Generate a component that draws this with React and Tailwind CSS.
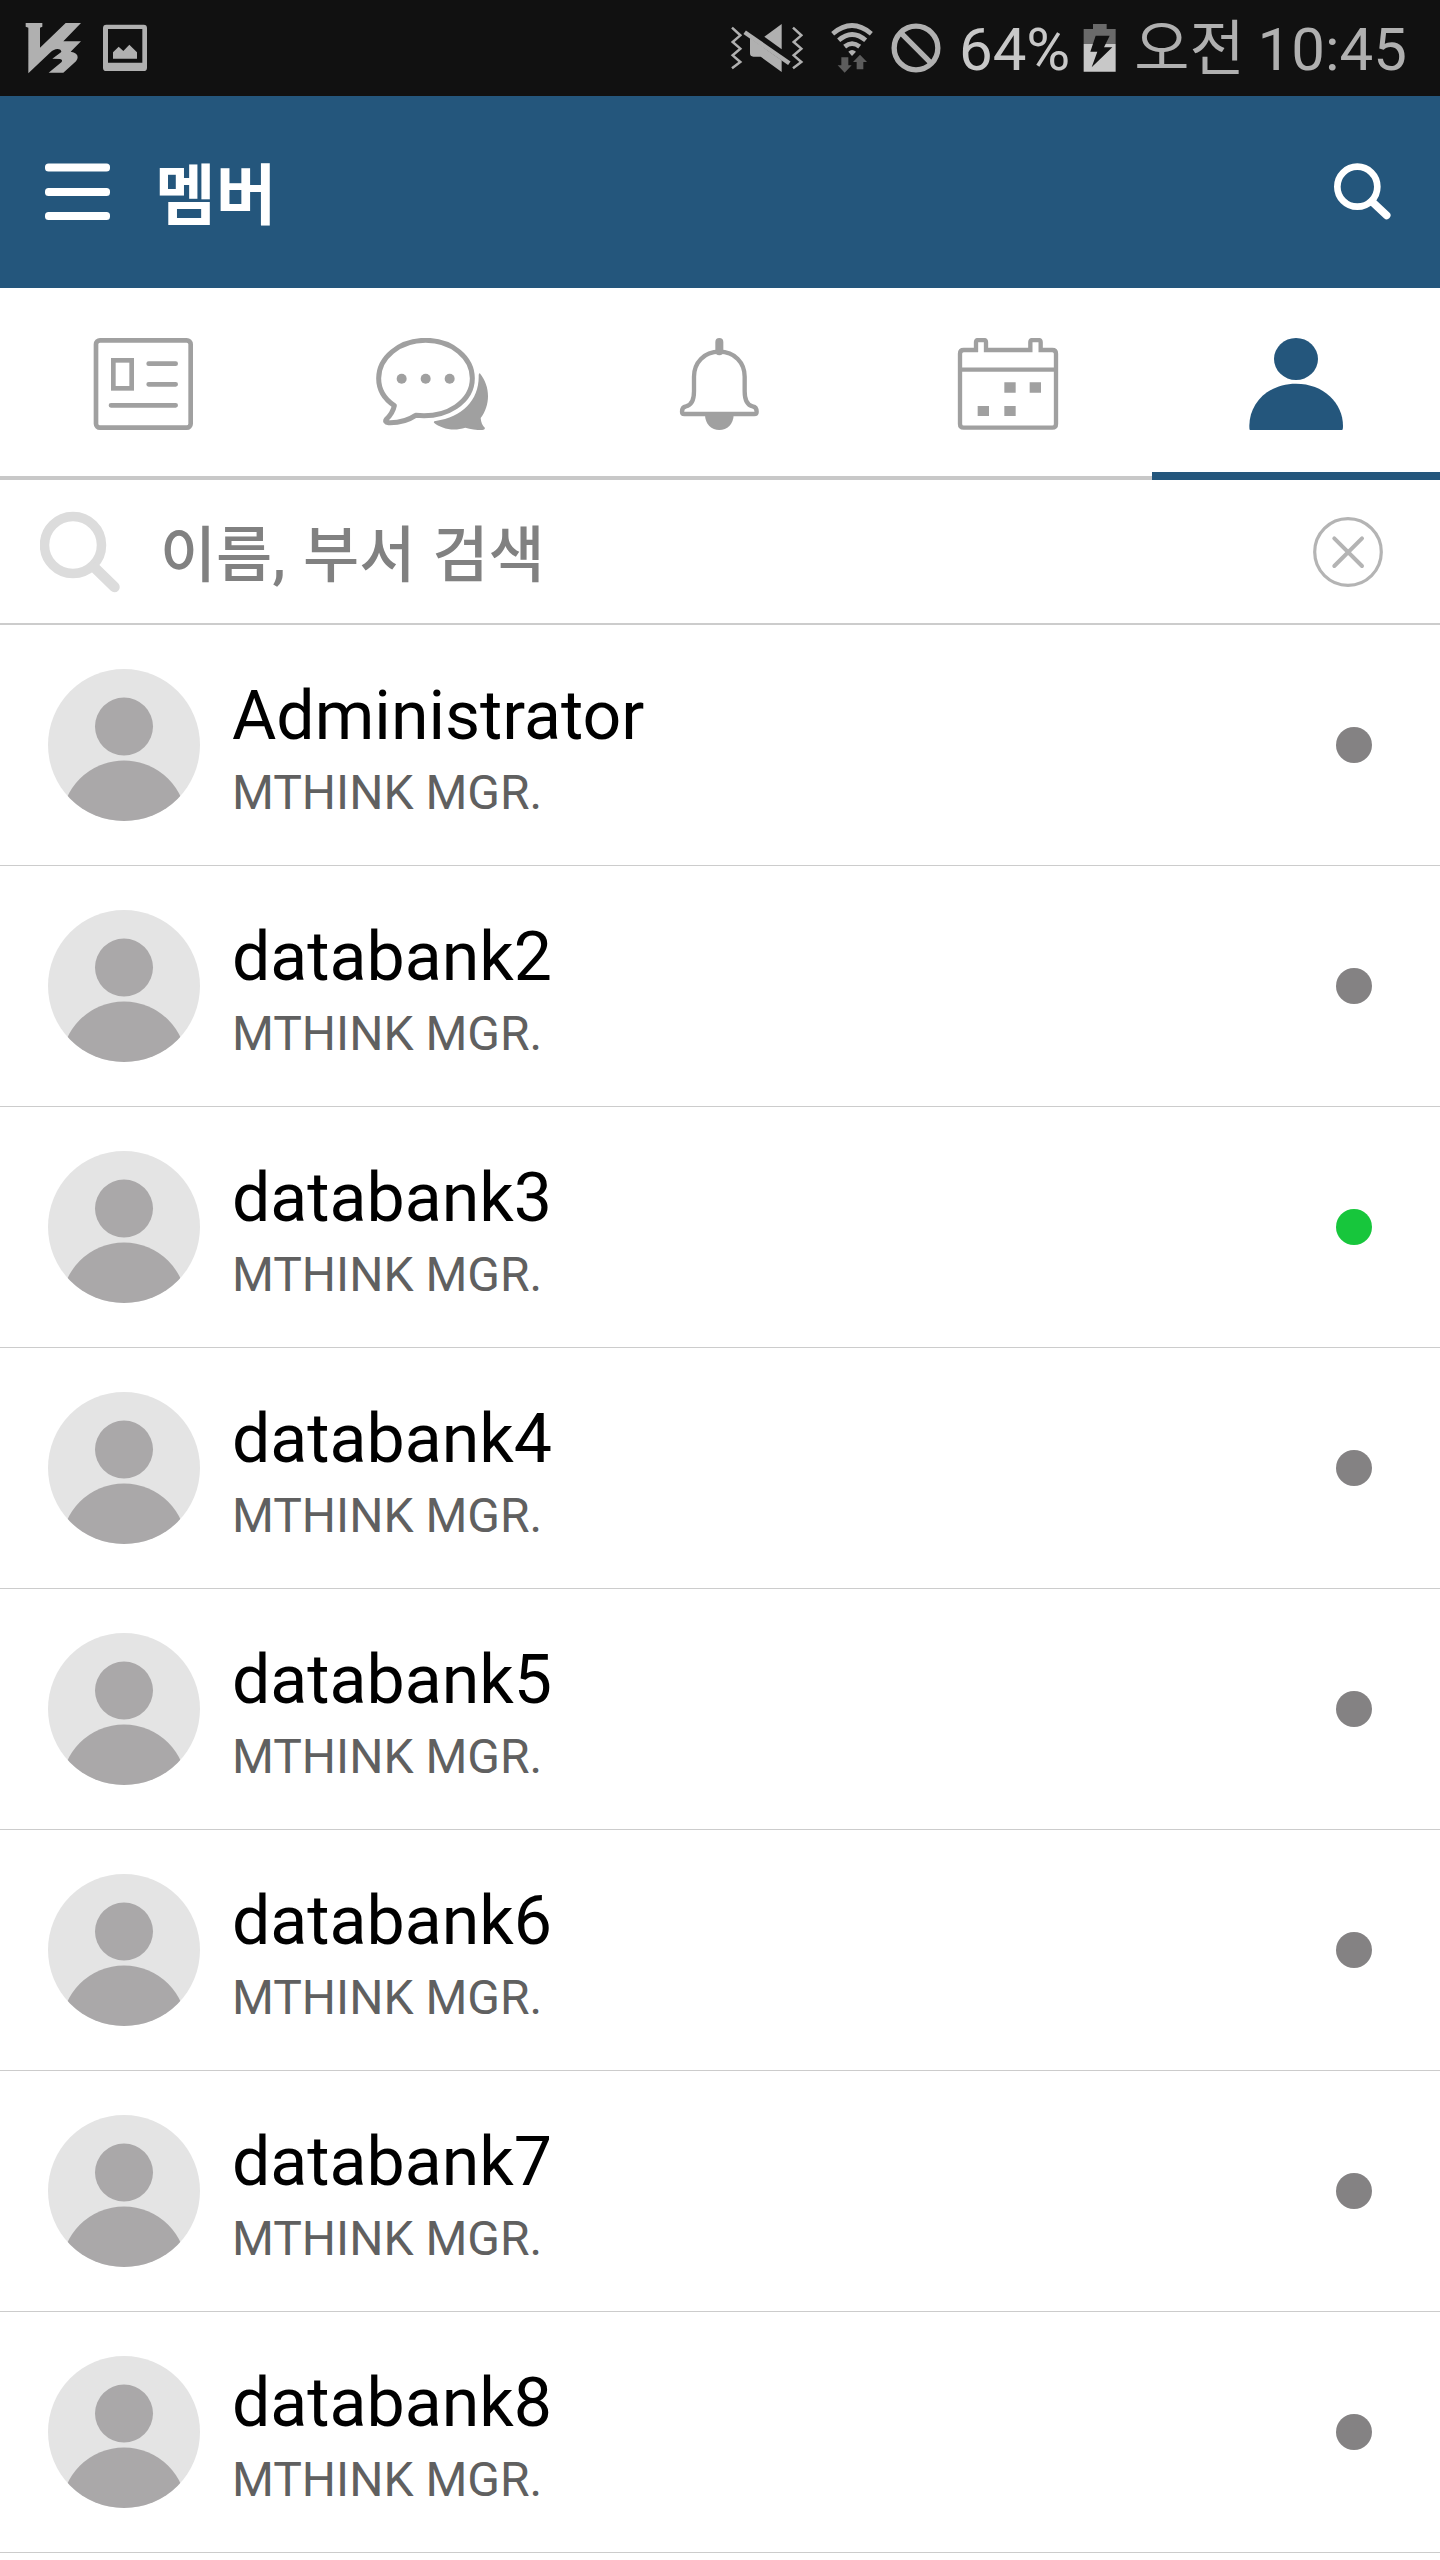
import React from "react";

const members = [
    { id: 1, name: "Administrator", dept: "MTHINK MGR.", online: false },
    { id: 2, name: "databank2", dept: "MTHINK MGR.", online: false },
    { id: 3, name: "databank3", dept: "MTHINK MGR.", online: true },
    { id: 4, name: "databank4", dept: "MTHINK MGR.", online: false },
    { id: 5, name: "databank5", dept: "MTHINK MGR.", online: false },
    { id: 6, name: "databank6", dept: "MTHINK MGR.", online: false },
    { id: 7, name: "databank7", dept: "MTHINK MGR.", online: false },
    { id: 8, name: "databank8", dept: "MTHINK MGR.", online: false },
];

const StatusBar = () => (
    <div className="flex h-24 items-start bg-[#111111] pl-[25px] pr-[33px] text-[#b0b0b0]">
        {/* V3 */}
        <svg className="mt-[22px] h-[52px] w-[57px]" viewBox="75 66 171 156" fill="currentColor">
            <path d="M77 69H127V80L120 83V143L197 69H243L190 124H243L212 155Q233 158 233 172Q233 178 228 184L190 218H146L184 187Q190 180 180 177L157 176L184 156Q184 147 172 147Q162 147 150 158L85 220V83L77 80Z" />
        </svg>
        {/* Screenshot */}
        <svg className="ml-[21px] mt-[24px] h-[48px] w-[44px]" viewBox="309 72 132 144" fill="currentColor">
            <path fillRule="evenodd" d="M319 74H431Q441 74 441 84V203Q441 213 431 213H319Q309 213 309 203V84Q309 74 319 74ZM324 87V188H427V87Z" />
            <path d="M339 176V157L356 140L370 153L388 134L411 157V176Z" />
        </svg>

        <div className="ml-auto flex items-start">
            {/* Mute */}
            <svg className="mt-[23px] h-[50px] w-[74px]" viewBox="90 69 222 150" fill="currentColor">
                <path d="M96 83L121 106L98 126L121 146L98 166L121 186L96 205M279 83L304 106L281 126L304 146L281 166L304 186L279 205" fill="none" stroke="currentColor" strokeWidth="7.5" />
                <path d="M245 72V148L193 110Z" />
                <path d="M150 114L245 181V216L182 170H160Q150 170 150 160Z" />
                <path d="M134 97L268 190" stroke="currentColor" strokeWidth="13" />
            </svg>
            {/* Wifi */}
            <svg className="ml-[27px] mt-[23px] h-[50px] w-[42px]" viewBox="394 68 126 150" fill="currentColor">
                <g fill="none" stroke="currentColor" strokeWidth="14">
                    <path d="M399 100Q457 51 515 100" />
                    <path d="M417 120Q457 85 498 120" />
                    <path d="M435 139Q457 121 480 139" />
                </g>
                <path d="M446 154Q457 144 469 154L457 167Z" />
                <g fill="#5c5c5c">
                    <path d="M425 171H446V195H456L435 217L414 195H425Z" />
                    <path d="M471 207H491V185H502L481 163L460 185H471Z" />
                </g>
            </svg>
            {/* Blocked */}
            <svg className="ml-[18px] mt-[23px] h-[50px] w-[50px]" viewBox="572 69 150 150" fill="none" stroke="currentColor" strokeWidth="16">
                <circle cx="647" cy="144" r="65.5" />
                <path d="M601 98L693 190" />
            </svg>
            <span className="ml-[18px] mr-[1px] mt-[14px] font-[Roboto] text-[60px] leading-[72px] text-[#c8c8c8]">64%</span>
            {/* Battery */}
            <svg className="ml-[12px] mt-[24px] h-[48px] w-[33px]" viewBox="67 72 99 144">
                <path d="M97 72H138V87H165V132H69V87H97Z" fill="#6a6a6a" />
                <path d="M69 132H165V215H69Z" fill="#c8c8c8" />
                <path d="M105 107H147L130 142H155L93 202L110 155H89Z" fill="#111111" />
            </svg>
            <span className="ml-[18px] mt-[14px] whitespace-nowrap font-[Roboto,'Noto_Sans_CJK_KR',sans-serif] text-[60px] leading-[72px] [word-spacing:-2px]">오전 10:45</span>
        </div>
    </div>
);

const Header = () => (
    <header className="flex h-48 items-center bg-[#24567c] pl-[45px] pr-[49px]">
        <svg className="h-[58px] w-[65px]" viewBox="0 0 65 58" fill="#ffffff">
            <rect y="0.5" width="65" height="8" rx="3.5" />
            <rect y="25" width="65" height="8" rx="3.5" />
            <rect y="49" width="65" height="8" rx="3.5" />
        </svg>
        <h1 className="mb-[4px] ml-[45px] font-['Noto_Sans_CJK_KR',sans-serif] text-[66px] font-bold leading-[80px] text-white">멤버</h1>
        <svg className="ml-auto h-[58px] w-[58px]" viewBox="820 488 174 174" fill="none" stroke="#ffffff" strokeLinecap="round">
            <circle cx="893" cy="559" r="60" strokeWidth="20" />
            <path d="M937 604L981 645" strokeWidth="23" />
        </svg>
    </header>
);

const Tabs = () => (
    <nav className="grid h-48 grid-cols-5 text-[#a0a0a0]">
        {/* News */}
        <div className="flex justify-center border-b-4 border-[#c8c8c8] pt-[50px]">
            <svg className="h-[92px] w-[102px]" viewBox="99 84 306 276" fill="none" stroke="currentColor" strokeWidth="14">
                <rect x="108" y="91" width="284" height="262" rx="12" />
                <rect x="160" y="151" width="55" height="84" />
                <path d="M266 161H347M266 223H347M153 286H347" strokeLinecap="round" />
            </svg>
        </div>
        {/* Chat */}
        <div className="flex justify-center border-b-4 border-[#c8c8c8] pt-[50px]">
            <svg className="h-[92px] w-[112px]" viewBox="948 84 336 276" fill="currentColor">
                <path d="M1003 287C974 268 956 240 956 205C956 143 1018 91 1097 91C1176 91 1237 143 1237 205C1237 274 1162 326 1067 316C1043 332 1014 339 985 338C977 338 975 333 979 328C993 314 1000 302 1003 287Z" fill="none" stroke="currentColor" strokeWidth="15" strokeLinejoin="round" />
                <circle cx="1025" cy="206" r="15" />
                <circle cx="1097" cy="206" r="15" />
                <circle cx="1169" cy="206" r="15" />
                <path d="M1259 189C1276 210 1284 234 1284 258C1284 283 1276 306 1262 324C1263 337 1267 347 1275 354C1274 358 1272 360 1267 360C1248 360 1232 358 1216 353C1179 365 1142 355 1122 338Q1120 333 1127 333C1209 321 1259 268 1256 194Z" />
            </svg>
        </div>
        {/* Notifications */}
        <div className="flex justify-center border-b-4 border-[#c8c8c8] pt-[50px]">
            <svg className="h-[92px] w-[82px]" viewBox="117 84 246 276" fill="none" stroke="currentColor" strokeWidth="13">
                <path d="M238 125C192 125 162 158 162 200V244C162 272 154 286 138 289Q126 291 126 305Q126 312 133 312H343Q350 312 350 305Q350 291 338 289C322 286 314 272 314 244V200C314 158 284 125 238 125Z" />
                <path d="M238 96V124" strokeWidth="24" strokeLinecap="round" />
                <path d="M195 314H281C281 342 261 360 238 360S195 342 195 314Z" fill="currentColor" stroke="none" />
            </svg>
        </div>
        {/* Calendar */}
        <div className="flex justify-center border-b-4 border-[#c8c8c8] pt-[50px]">
            <svg className="h-[92px] w-[102px]" viewBox="951 84 306 276" fill="none" stroke="currentColor" strokeWidth="13">
                <path d="M1014 120H971Q960 120 960 131V342Q960 353 971 353H1237Q1248 353 1248 342V131Q1248 120 1237 120H1202V97Q1202 90 1195 90H1178Q1171 90 1171 97V120H1038V97Q1038 90 1031 90H1015Q1008 90 1008 97V126M1171 114V126M1202 114V126M1038 114V126" />
                <path d="M960 179H1248" />
                <path d="M1093 217H1127V248H1093ZM1169 217H1203V248H1169ZM1013 288H1047V318H1013ZM1093 288H1127V318H1093Z" fill="currentColor" stroke="none" />
            </svg>
        </div>
        {/* Members */}
        <div className="flex justify-center border-b-8 border-[#24567c] pt-[50px]">
            <svg className="h-[92px] w-[94px]" viewBox="447 84 282 276" fill="#24567c">
                <ellipse cx="588" cy="147" rx="66" ry="63" />
                <path d="M450 360Q448 360 448 348C448 278 506 221 588 221S729 278 729 348Q729 360 726 360Z" />
            </svg>
        </div>
    </nav>
);

const SearchBar = () => (
    <div className="flex h-[145px] items-start border-b-2 border-[#cccccc] pl-[40px] pr-[57px]">
        <svg className="mt-[31px] h-[82px] w-[81px]" viewBox="0 0 81 82" fill="none" stroke="#dcdcdc" strokeLinecap="round">
            <circle cx="33" cy="34" r="28.5" strokeWidth="9.5" />
            <path d="M55 57L74.5 76" strokeWidth="10.5" />
        </svg>
        <span className="ml-[39px] mt-[36px] font-[Roboto,'Noto_Sans_CJK_KR',sans-serif] text-[61px] font-medium leading-[80px] text-[#818181] [word-spacing:2px]">이름, 부서 검색</span>
        <svg className="ml-auto mt-[37px] h-[70px] w-[70px]" viewBox="0 0 70 70" fill="none" stroke="#b4b4b4" strokeLinecap="round">
            <circle cx="35" cy="35" r="33.3" strokeWidth="3.2" />
            <path d="M21.3 21.3L49 49M49 21.3L21.3 49" strokeWidth="4" />
        </svg>
    </div>
);

const MemberRow = ({ member }) => (
    <li className="flex h-[241px] items-start border-b border-[#cccccc] pl-12 pr-[68px]">
        <div className="mt-[44px] h-[152px] w-[152px] overflow-hidden rounded-full bg-[#e4e4e4]">
            <svg className="h-full w-full" viewBox="0 0 152 152" fill="#aaa8a9">
                <circle cx="76" cy="57.5" r="29" />
                <circle cx="76" cy="154" r="62.5" />
            </svg>
        </div>
        <div className="ml-[32px] mt-[51px] font-[Roboto]">
            <p className="text-[68px] leading-[80px] text-black">{member.name}</p>
            <p className="mt-[7px] text-[48px] leading-[60px] text-[#606060]">{member.dept}</p>
        </div>
        <span className={`ml-auto mt-[102px] h-9 w-9 rounded-full ${member.online ? "bg-[#17c63c]" : "bg-[#848283]"}`} />
    </li>
);

export default function App() {
    return (
        <div className="h-[2560px] w-[1440px] overflow-hidden bg-white">
            <StatusBar />
            <Header />
            <Tabs />
            <SearchBar />
            <ul>
                {members.map((member) => (
                    <MemberRow key={member.id} member={member} />
                ))}
            </ul>
        </div>
    );
}
